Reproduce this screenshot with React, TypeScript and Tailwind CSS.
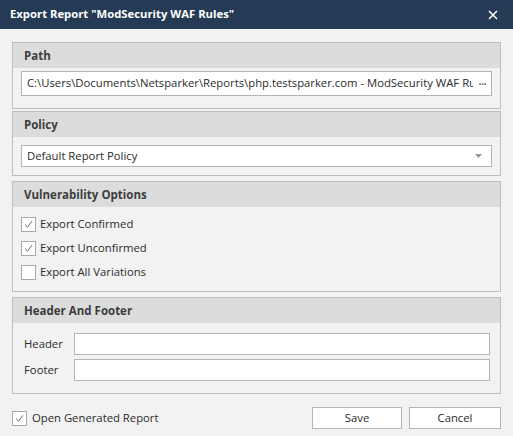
import React from "react";

const font = { fontFamily: '"Open Sans", "Noto Sans", "Liberation Sans", sans-serif' };

const Check: React.FC<{ checked?: boolean }> = ({ checked }) => (
  <span className="flex items-center justify-center w-[15px] h-[15px] border border-[#a8a8a8] bg-white shrink-0">
    {checked && (
      <svg width="9" height="9" viewBox="0 0 9 9">
        <path d="M1.2 4.8 L3.6 7.2 L7.8 1.4" fill="none" stroke="#555" strokeWidth="0.9" />
      </svg>
    )}
  </span>
);

const Group: React.FC<{ title: string; className?: string; children: React.ReactNode }> = ({
  title,
  className,
  children,
}) => (
  <div className={"border border-[#bdbdbd] " + (className ?? "")}>
    <div className="h-[25px] bg-[#dcdcdc] flex items-center px-[11px] text-[11.5px] font-bold text-[#3d3d3d]">
      {title}
    </div>
    {children}
  </div>
);

export default function App() {
  return (
    <div className="w-[513px] h-[436px] bg-[#f2f2f2] flex flex-col text-[#2b2b2b] text-[11.3px]" style={font}>
      <div className="h-[29px] bg-[#253a54] flex items-center justify-between pl-[10px] pr-[15px] shrink-0">
        <span className="text-white text-[11.3px] font-bold">Export Report "ModSecurity WAF Rules"</span>
        <svg width="10" height="10" viewBox="0 0 10 10">
          <path d="M1 1 L9 9 M9 1 L1 9" stroke="#fff" strokeWidth="1.5" />
        </svg>
      </div>

      <div className="flex flex-col px-[12px] pt-[13px]">
        <Group title="Path" className="h-[67px]">
          <div className="mx-[8px] mt-[3px] h-[25px] bg-white border border-[#b4b4b4] flex items-center pl-[5px] pr-[5px] whitespace-nowrap">
            <span className="flex-1 min-w-0 overflow-hidden">
              C:\Users\Documents\Netsparker\Reports\php.testsparker.com - ModSecurity WAF Rules
            </span>
            <span className="ml-[5px] shrink-0 text-[8px] text-[#666] tracking-[-0.5px]">•••</span>
          </div>
        </Group>

        <Group title="Policy" className="h-[65px] mt-[2px]">
          <div className="mx-[8px] mt-[8px] h-[22px] bg-white border border-[#b4b4b4] flex items-center justify-between pl-[5px] pr-[9px]">
            <span>Default Report Policy</span>
            <svg width="7" height="4" viewBox="0 0 7 4">
              <path d="M0 0 H7 L3.5 4 Z" fill="#999" />
            </svg>
          </div>
        </Group>

        <Group title="Vulnerability Options" className="h-[111px] mt-[5px]">
          <div className="flex flex-col gap-[9px] pl-[8px] pt-[10px]">
            <label className="flex items-center gap-[4px] h-[15px]">
              <Check checked />
              Export Confirmed
            </label>
            <label className="flex items-center gap-[4px] h-[15px]">
              <Check checked />
              Export Unconfirmed
            </label>
            <label className="flex items-center gap-[4px] h-[15px]">
              <Check />
              Export All Variations
            </label>
          </div>
        </Group>

        <Group title="Header And Footer" className="h-[97px] mt-[5px]">
          <div className="flex flex-col gap-[4px] pl-[11px] pr-[10px] pt-[10px]">
            <div className="flex items-center">
              <span className="w-[50px]">Header</span>
              <div className="flex-1 h-[22px] bg-white border border-[#b4b4b4]" />
            </div>
            <div className="flex items-center">
              <span className="w-[50px]">Footer</span>
              <div className="flex-1 h-[22px] bg-white border border-[#b4b4b4]" />
            </div>
          </div>
        </Group>

        <div className="flex items-center mt-[13px] h-[22px]">
          <label className="flex items-center gap-[5px] flex-1">
            <Check checked />
            Open Generated Report
          </label>
          <button className="w-[90px] h-[22px] bg-white border border-[#b4b4b4]">Save</button>
          <button className="w-[92px] h-[22px] bg-white border border-[#b4b4b4] ml-[7px]">Cancel</button>
        </div>
      </div>
    </div>
  );
}
